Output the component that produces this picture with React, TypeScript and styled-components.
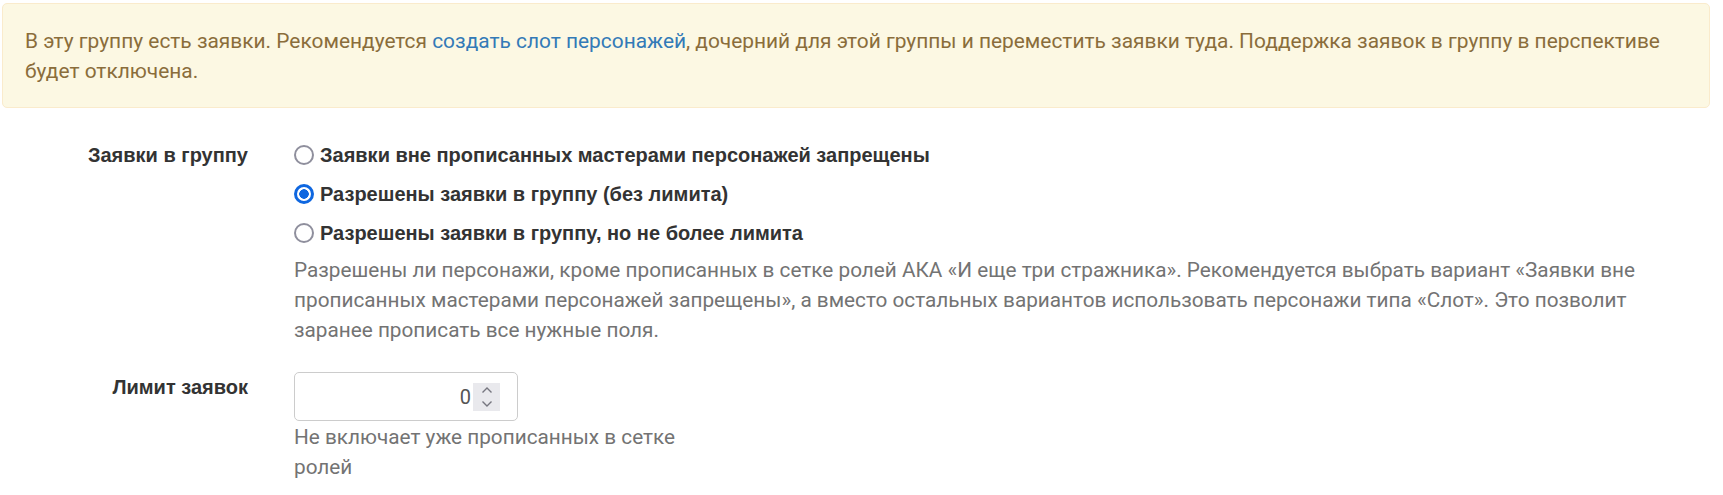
import React from "react";
import styled, { createGlobalStyle } from "styled-components";

const GlobalStyle = createGlobalStyle`
    body {
        margin: 0;
        background: #fff;
        font-family: Roboto, "Liberation Sans", sans-serif;
        font-size: 20px;
        line-height: 30px;
        color: #333;
    }
`;

type Option = { id: string; text: string };

const options: Option[] = [
    { id: "forbidden", text: "Заявки вне прописанных мастерами персонажей запрещены" },
    { id: "unlimited", text: "Разрешены заявки в группу (без лимита)" },
    { id: "limited", text: "Разрешены заявки в группу, но не более лимита" },
];

export default function App() {
    const [mode, setMode] = React.useState("unlimited");
    const [limit, setLimit] = React.useState(0);

    return <Page>
        <GlobalStyle />
        <Alert>
            В эту группу есть заявки. Рекомендуется <AlertLink href="#">создать слот персонажей</AlertLink>, дочерний для этой группы и переместить заявки туда. Поддержка заявок в группу в перспективе будет отключена.
        </Alert>

        <FormRow>
            <FieldLabel>Заявки в группу</FieldLabel>
            <Controls>
                {options.map(o => (
                    <RadioRow key={o.id}>
                        <RadioInput
                            type="radio"
                            name="claims"
                            checked={mode === o.id}
                            onChange={() => setMode(o.id)}
                        />
                        {o.text}
                    </RadioRow>
                ))}
                <HelpText $offset={-2}>
                    Разрешены ли персонажи, кроме прописанных в сетке ролей АКА «И еще три стражника». Рекомендуется выбрать вариант «Заявки вне прописанных мастерами персонажей запрещены», а вместо остальных вариантов использовать персонажи типа «Слот». Это позволит заранее прописать все нужные поля.
                </HelpText>
            </Controls>
        </FormRow>

        <FormRow $spaced>
            <FieldLabel>Лимит заявок</FieldLabel>
            <Controls>
                <NumberBox>
                    <NumberInput value={limit} onChange={e => setLimit(Number(e.target.value) || 0)} />
                    <Spinner>
                        <SpinBtn onClick={() => setLimit(limit + 1)}>
                            <svg width="12" height="8" viewBox="0 0 12 8"><path d="M1.5 6.5 L6 2 L10.5 6.5" fill="none" stroke="#76767f" strokeWidth="1.4" /></svg>
                        </SpinBtn>
                        <SpinBtn onClick={() => setLimit(Math.max(0, limit - 1))}>
                            <svg width="12" height="8" viewBox="0 0 12 8"><path d="M1.5 1.5 L6 6 L10.5 1.5" fill="none" stroke="#76767f" strokeWidth="1.4" /></svg>
                        </SpinBtn>
                    </Spinner>
                </NumberBox>
                <HelpText $narrow $offset={-8}>Не включает уже прописанных в сетке ролей</HelpText>
            </Controls>
        </FormRow>
    </Page>;
}

const Page = styled.div`
    padding: 3px 13px 20px 2px;
`;

const Alert = styled.div`
    background: #fcf8e3;
    border: 1px solid #faebcc;
    border-radius: 5px;
    color: #8a6d3b;
    font-size: 20.9px;
    padding: 22px 12px 21px 22px;
`;

const AlertLink = styled.a`
    color: #337ab7;
    text-decoration: none;
`;

const FormRow = styled.div<{ $spaced?: boolean }>`
    display: grid;
    grid-template-columns: 246px 1fr;
    column-gap: 46px;
    margin-top: ${p => p.$spaced ? "27px" : "32px"};
`;

const FieldLabel = styled.label`
    text-align: right;
    font-family: "Liberation Sans", Arial, sans-serif;
    font-weight: bold;
    color: #333;
`;

const Controls = styled.div`
    display: flex;
    flex-direction: column;
    gap: 9px;
`;

const RadioRow = styled.label`
    display: flex;
    align-items: center;
    gap: 6px;
    font-family: "Liberation Sans", Arial, sans-serif;
    font-weight: bold;
    color: #333;
    cursor: pointer;
`;

const RadioInput = styled.input`
    appearance: none;
    margin: 0;
    width: 20px;
    height: 20px;
    border-radius: 50%;
    border: 2.5px solid #8f8f9d;
    background: #fff;
    box-sizing: border-box;
    &:checked {
        border: 3px solid #0f67e0;
        background: radial-gradient(circle, #0f67e0 0 4.5px, #fff 5px);
    }
`;

const HelpText = styled.div<{ $narrow?: boolean; $offset: number }>`
    color: #737373;
    font-size: 20.75px;
    max-width: ${p => p.$narrow ? "400px" : "none"};
    margin-top: ${p => p.$offset}px;
`;

const NumberBox = styled.div`
    display: flex;
    align-items: center;
    width: 224px;
    height: 49px;
    box-sizing: border-box;
    border: 1px solid #ccc;
    border-radius: 5px;
    padding: 0 17px 0 12px;
`;

const NumberInput = styled.input`
    flex: 1;
    min-width: 0;
    border: none;
    outline: none;
    background: transparent;
    text-align: right;
    font-family: Roboto, sans-serif;
    font-size: 20px;
    color: #555;
    padding: 0 2px 0 0;
`;

const Spinner = styled.div`
    display: flex;
    flex-direction: column;
    width: 27px;
    height: 28px;
    background: #e9e9ed;
`;

const SpinBtn = styled.span`
    flex: 1;
    display: flex;
    align-items: center;
    justify-content: center;
    cursor: pointer;
`;
